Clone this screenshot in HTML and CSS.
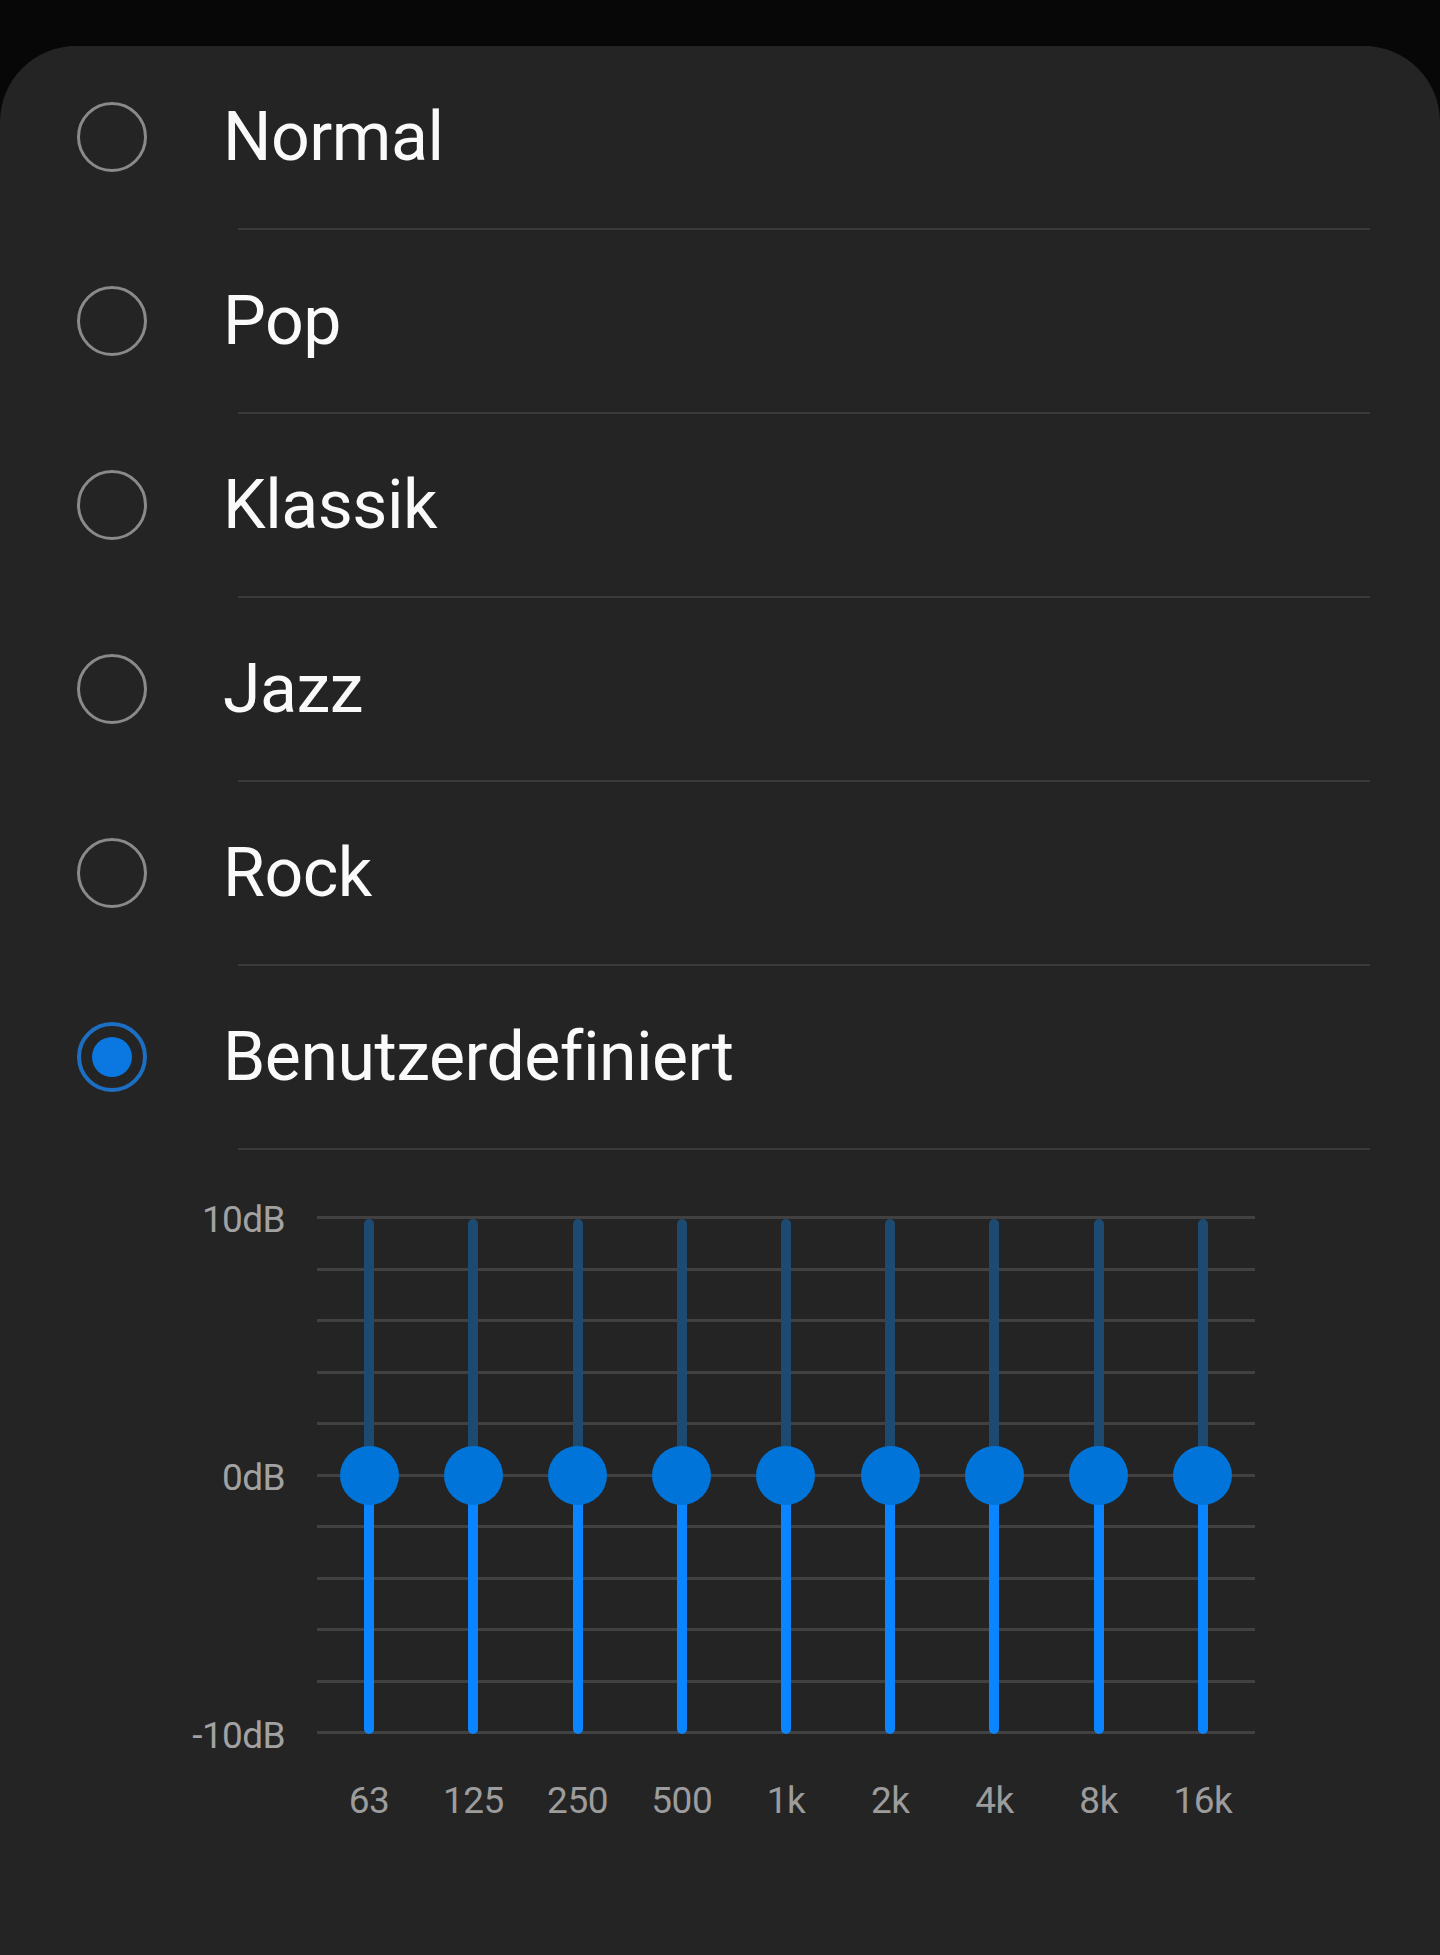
FILE: index.html
```html
<!DOCTYPE html>
<html lang="de">
<head>
<meta charset="utf-8">
<title>Equalizer</title>
<link rel="stylesheet" href="styles.css">
</head>
<body>
<div class="sheet">
  <ul class="presets">
    <li class="preset"><div class="row"><span class="radio"></span><span class="name">Normal</span></div><div class="divider"></div></li>
    <li class="preset"><div class="row"><span class="radio"></span><span class="name">Pop</span></div><div class="divider"></div></li>
    <li class="preset"><div class="row"><span class="radio"></span><span class="name">Klassik</span></div><div class="divider"></div></li>
    <li class="preset"><div class="row"><span class="radio"></span><span class="name">Jazz</span></div><div class="divider"></div></li>
    <li class="preset"><div class="row"><span class="radio"></span><span class="name">Rock</span></div><div class="divider"></div></li>
    <li class="preset"><div class="row"><span class="radio radio-on"><span class="dot"></span></span><span class="name">Benutzerdefiniert</span></div><div class="divider"></div></li>
  </ul>

  <div class="eq">
    <div class="axis">
      <span>10dB</span>
      <span>0dB</span>
      <span>-10dB</span>
    </div>
    <div class="chart">
      <div class="plot">
        <div class="grid">
          <i class="gridline"></i><i class="gridline"></i><i class="gridline"></i><i class="gridline"></i>
          <i class="gridline"></i><i class="gridline"></i><i class="gridline"></i><i class="gridline"></i>
          <i class="gridline"></i><i class="gridline"></i><i class="gridline"></i>
        </div>
        <div class="bands">
          <div class="band"><div class="track"></div><div class="knob"></div></div>
          <div class="band"><div class="track"></div><div class="knob"></div></div>
          <div class="band"><div class="track"></div><div class="knob"></div></div>
          <div class="band"><div class="track"></div><div class="knob"></div></div>
          <div class="band"><div class="track"></div><div class="knob"></div></div>
          <div class="band"><div class="track"></div><div class="knob"></div></div>
          <div class="band"><div class="track"></div><div class="knob"></div></div>
          <div class="band"><div class="track"></div><div class="knob"></div></div>
          <div class="band"><div class="track"></div><div class="knob"></div></div>
        </div>
      </div>
      <div class="freqs">
        <span>63</span><span>125</span><span>250</span><span>500</span><span>1k</span><span>2k</span><span>4k</span><span>8k</span><span>16k</span>
      </div>
    </div>
  </div>
</div>
</body>
</html>
```
FILE: styles.css
```css
html, body {
  margin: 0;
  padding: 0;
  background: #070707;
}

body {
  font-family: Roboto, "Noto Sans", "Liberation Sans", sans-serif;
  color: #fafafa;
}

.sheet {
  margin-top: 46px;
  min-height: 1909px;
  background: #242424;
  border-radius: 76px 76px 0 0;
  overflow: hidden;
}

.presets {
  list-style: none;
  margin: 0;
  padding: 0;
}

.preset {
  display: flex;
  flex-direction: column;
}

.row {
  height: 182px;
  display: flex;
  align-items: center;
}

.radio {
  box-sizing: border-box;
  width: 70px;
  height: 70px;
  border: 3px solid #8a8a8a;
  border-radius: 50%;
  margin-left: 77px;
  margin-right: 76px;
  display: flex;
  align-items: center;
  justify-content: center;
  flex: none;
}

.radio-on {
  border: 4px solid #1c6fc2;
}

.dot {
  width: 40px;
  height: 40px;
  border-radius: 50%;
  background: #0a78e0;
}

.name {
  font-size: 68px;
  letter-spacing: -0.5px;
  color: #fafafa;
}

.divider {
  height: 2px;
  margin-left: 238px;
  width: 1132px;
  background: #3a3a3a;
}

.eq {
  display: flex;
  align-items: flex-start;
  gap: 32px;
  padding-top: 48px;
}

.axis {
  width: 285px;
  height: 560px;
  display: flex;
  flex-direction: column;
  justify-content: space-between;
  align-items: flex-end;
  font-size: 37px;
  line-height: 44px;
  letter-spacing: -0.6px;
  color: #a2a2a2;
}

.chart {
  width: 938px;
}

.plot {
  position: relative;
  height: 518px;
  margin-top: 18px;
}

.grid {
  height: 100%;
  display: flex;
  flex-direction: column;
  justify-content: space-between;
}

.gridline {
  display: block;
  height: 3px;
  background: #414141;
}

.bands {
  position: absolute;
  inset: 0;
  display: flex;
}

.band {
  flex: 1;
  position: relative;
  display: flex;
  justify-content: center;
}

.track {
  width: 10px;
  height: calc(100% - 3px);
  margin-top: 3px;
  border-radius: 5px;
  background: linear-gradient(#1d4a70 50%, #0a84ff 50%);
}

.knob {
  position: absolute;
  top: 50%;
  left: 50%;
  width: 59px;
  height: 59px;
  margin: -29.5px 0 0 -29.5px;
  border-radius: 50%;
  background: #0074d8;
}

.freqs {
  display: flex;
  margin-top: 45px;
  font-size: 37px;
  line-height: 44px;
  color: #9c9c9c;
}

.freqs span {
  flex: 1;
  text-align: center;
  letter-spacing: -0.5px;
}
```
